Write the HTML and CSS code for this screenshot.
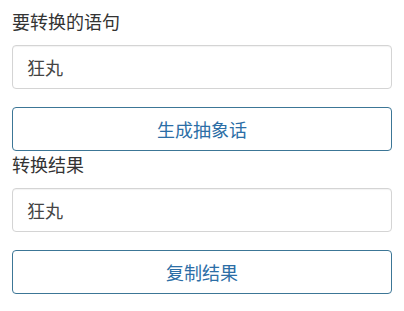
FILE: index.html
```html
<!DOCTYPE html>
<html lang="zh-CN">
<head>
<meta charset="utf-8">
<link rel="stylesheet" href="styles.css">
</head>
<body>
<div class="page">
  <div class="label label-first">要转换的语句</div>
  <input class="field" type="text" value="狂丸">
  <button class="btn">生成抽象话</button>
  <div class="label">转换结果</div>
  <input class="field" type="text" value="狂丸">
  <button class="btn">复制结果</button>
</div>
</body>
</html>
```
FILE: styles.css
```css
html, body {
  margin: 0;
  padding: 0;
  background: #ffffff;
}
.page {
  display: flex;
  flex-direction: column;
  padding: 8px 12px 0 12px;
  font-family: "Noto Sans CJK SC", "Noto Sans", sans-serif;
  font-size: 18px;
  color: #333333;
}
.label {
  line-height: 26px;
  height: 26px;
  margin-bottom: 11px;
}
.field {
  box-sizing: border-box;
  height: 44px;
  width: 100%;
  margin: 0 0 18px 0;
  padding: 0 14px;
  border: 1px solid #d4d4d4;
  border-radius: 4px;
  font-family: inherit;
  font-size: 18px;
  color: #444444;
  background: #ffffff;
  box-shadow: inset 0 1px 1px rgba(0,0,0,0.05);
  outline: none;
}
.btn {
  box-sizing: border-box;
  height: 44px;
  width: 100%;
  margin: 0;
  padding: 0;
  border: 1px solid #3c7696;
  border-radius: 4px;
  background: #ffffff;
  font-family: inherit;
  font-size: 18px;
  color: #2c6ea6;
  cursor: pointer;
}
```
